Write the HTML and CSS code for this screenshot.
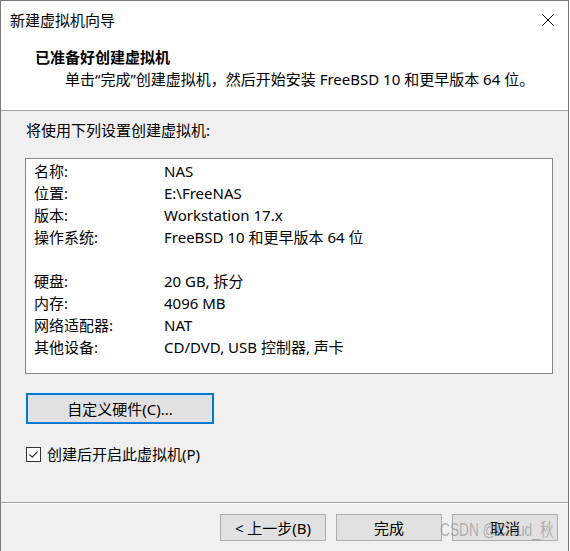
FILE: index.html
```html
<!DOCTYPE html>
<html lang="zh">
<head>
<meta charset="utf-8">
<link rel="stylesheet" href="styles.css">
</head>
<body>
<div class="window">
  <div class="top">
    <div class="titlebar">
      <span class="title">新建虚拟机向导</span>
      <span class="close">
        <svg width="12" height="12" viewBox="0 0 12 12"><path d="M0.5 0.5 L11.5 11.5 M11.5 0.5 L0.5 11.5" stroke="#000" stroke-width="1" fill="none"/></svg>
      </span>
    </div>
    <div class="header">
      <div class="h-title">已准备好创建虚拟机</div>
      <div class="h-sub">单击“完成”创建虚拟机，然后开始安装 FreeBSD 10 和更早版本 64 位。</div>
    </div>
  </div>
  <div class="content">
    <div class="intro">将使用下列设置创建虚拟机:</div>
    <div class="listbox">
      <div class="row"><span class="k">名称:</span><span class="v">NAS</span></div>
      <div class="row"><span class="k">位置:</span><span class="v">E:\FreeNAS</span></div>
      <div class="row"><span class="k">版本:</span><span class="v">Workstation 17.x</span></div>
      <div class="row"><span class="k">操作系统:</span><span class="v">FreeBSD 10 和更早版本 64 位</span></div>
      <div class="row"></div>
      <div class="row"><span class="k">硬盘:</span><span class="v">20 GB, 拆分</span></div>
      <div class="row"><span class="k">内存:</span><span class="v">4096 MB</span></div>
      <div class="row"><span class="k">网络适配器:</span><span class="v">NAT</span></div>
      <div class="row"><span class="k">其他设备:</span><span class="v">CD/DVD, USB 控制器, 声卡</span></div>
    </div>
    <div class="custom-btn">自定义硬件(C)...</div>
    <label class="check-row">
      <span class="checkbox">
        <svg width="11" height="11" viewBox="0 0 11 11"><path d="M1.5 5.5 L4.2 8.2 L9.5 2.5" stroke="#333" stroke-width="1.2" fill="none"/></svg>
      </span>
      <span>创建后开启此虚拟机(P)</span>
    </label>
  </div>
  <div class="footer">
    <div class="btn">&lt; 上一步(B)</div>
    <div class="btn">完成</div>
    <div class="btn">取消</div>
  </div>
  <div class="watermark">CSDN @Cloud_秋</div>
</div>
</body>
</html>
```
FILE: styles.css
```css
html, body {
  margin: 0;
  padding: 0;
  background: #ffffff;
}
body {
  width: 570px;
  height: 551px;
  overflow: hidden;
  font-family: "Noto Sans", "Noto Sans CJK SC", sans-serif;
  font-size: 15px;
  color: #000;
}
.window {
  position: relative;
  width: 567px;
  height: 550px;
  border: 1px solid #7a7a7a;
  border-bottom: none;
  background: #f0f0f0;
  display: flex;
  flex-direction: column;
}
.top {
  background: #fff;
  border-bottom: 1px solid #a0a0a0;
  height: 109px;
}
.titlebar {
  height: 39px;
  display: flex;
  align-items: center;
  justify-content: space-between;
  padding-left: 9px;
  padding-right: 14px;
}
.title {
  line-height: 20px;
  margin-top: -1px;
}
.close {
  display: flex;
  margin-top: -1px;
}
.header {
  padding-left: 34px;
  padding-top: 7px;
}
.h-title {
  font-weight: bold;
  line-height: 20px;
  font-family: "Noto Sans CJK SC", sans-serif;
}
.h-sub {
  padding-left: 30px;
  line-height: 24px;
}
.content {
  padding-left: 24px;
  height: 391px;
  border-bottom: 1px solid #a0a0a0;
  box-shadow: 0 1px 0 #fff;
}
.intro {
  margin-top: 9px;
  line-height: 20px;
  padding-left: 1px;
}
.listbox {
  margin-top: 18px;
  width: 528px;
  height: 216px;
  border: 1px solid #828790;
  background: #fff;
  padding-top: 1px;
  box-sizing: border-box;
}
.row {
  display: flex;
  height: 22px;
  line-height: 22px;
  padding-left: 8px;
}
.k {
  width: 130px;
  flex: none;
}
.custom-btn {
  margin-top: 19px;
  margin-left: 1px;
  width: 184px;
  height: 27px;
  border: 2px solid #0078d7;
  background: #e1e1e1;
  display: flex;
  align-items: center;
  justify-content: center;
  line-height: 20px;
}
.check-row {
  margin-top: 20px;
  margin-left: 1px;
  display: flex;
  align-items: center;
  gap: 6px;
  line-height: 20px;
}
.checkbox {
  width: 13px;
  height: 13px;
  border: 1px solid #333;
  background: #fff;
  display: flex;
  align-items: center;
  justify-content: center;
}
.footer {
  display: flex;
  gap: 10px;
  padding-left: 219px;
  padding-top: 11px;
}
.btn {
  width: 104px;
  height: 25px;
  border: 1px solid #adadad;
  background: #e1e1e1;
  display: flex;
  align-items: center;
  justify-content: center;
  line-height: 20px;
}
.watermark {
  position: absolute;
  left: 439px;
  top: 518px;
  font-family: "Liberation Sans", sans-serif;
  font-size: 19px;
  line-height: 22px;
  transform: scaleX(0.72);
  transform-origin: left center;
  color: rgba(120, 120, 120, 0.5);
  white-space: nowrap;
}
```
